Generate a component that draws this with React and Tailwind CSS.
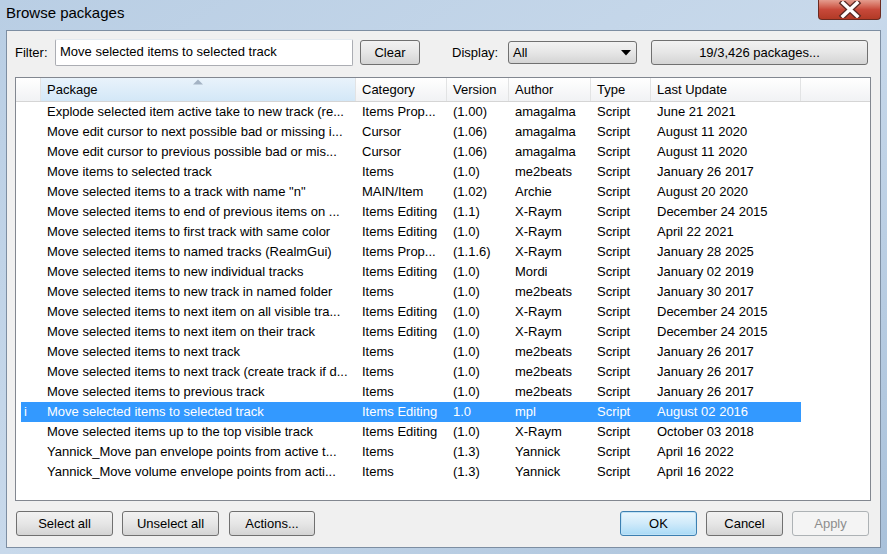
import React from 'react';

const rows = [
  ['', 'Explode selected item active take to new track (re...', 'Items Prop...', '(1.00)', 'amagalma', 'Script', 'June 21 2021'],
  ['', 'Move edit cursor to next possible bad or missing i...', 'Cursor', '(1.06)', 'amagalma', 'Script', 'August 11 2020'],
  ['', 'Move edit cursor to previous possible bad or mis...', 'Cursor', '(1.06)', 'amagalma', 'Script', 'August 11 2020'],
  ['', 'Move items to selected track', 'Items', '(1.0)', 'me2beats', 'Script', 'January 26 2017'],
  ['', 'Move selected items to a track with name "n"', 'MAIN/Item', '(1.02)', 'Archie', 'Script', 'August 20 2020'],
  ['', 'Move selected items to end of previous items on ...', 'Items Editing', '(1.1)', 'X-Raym', 'Script', 'December 24 2015'],
  ['', 'Move selected items to first track with same color', 'Items Editing', '(1.0)', 'X-Raym', 'Script', 'April 22 2021'],
  ['', 'Move selected items to named tracks (RealmGui)', 'Items Prop...', '(1.1.6)', 'X-Raym', 'Script', 'January 28 2025'],
  ['', 'Move selected items to new individual tracks', 'Items Editing', '(1.0)', 'Mordi', 'Script', 'January 02 2019'],
  ['', 'Move selected items to new track in named folder', 'Items', '(1.0)', 'me2beats', 'Script', 'January 30 2017'],
  ['', 'Move selected items to next item on all visible tra...', 'Items Editing', '(1.0)', 'X-Raym', 'Script', 'December 24 2015'],
  ['', 'Move selected items to next item on their track', 'Items Editing', '(1.0)', 'X-Raym', 'Script', 'December 24 2015'],
  ['', 'Move selected items to next track', 'Items', '(1.0)', 'me2beats', 'Script', 'January 26 2017'],
  ['', 'Move selected items to next track (create track if d...', 'Items', '(1.0)', 'me2beats', 'Script', 'January 26 2017'],
  ['', 'Move selected items to previous track', 'Items', '(1.0)', 'me2beats', 'Script', 'January 26 2017'],
  ['i', 'Move selected items to selected track', 'Items Editing', '1.0', 'mpl', 'Script', 'August 02 2016'],
  ['', 'Move selected items up to the top visible track', 'Items Editing', '(1.0)', 'X-Raym', 'Script', 'October 03 2018'],
  ['', 'Yannick_Move pan envelope points from active t...', 'Items', '(1.3)', 'Yannick', 'Script', 'April 16 2022'],
  ['', 'Yannick_Move volume envelope points from acti...', 'Items', '(1.3)', 'Yannick', 'Script', 'April 16 2022'],
];

const SELECTED = 15;

const btn =
  'h-[25px] rounded-[3px] border border-[#707070] bg-gradient-to-b from-[#f2f2f2] via-[#e6e6e6] to-[#d4d4d4] text-[13px] text-black flex items-center justify-center';

const Header = ({ label, active, arrow }) => (
  <div
    className={
      'relative h-full flex items-center pl-[6px] border-r border-[#e2e3e4] ' +
      (active ? 'bg-gradient-to-b from-[#e9f3fb] to-[#d3e7f7]' : '')
    }
  >
    {arrow && (
      <svg className="absolute left-[152px] top-[1px]" width="10" height="6" viewBox="0 0 10 6">
        <path d="M0 5.5 L5 0.5 L10 5.5 Z" fill="#a4b3c4" />
      </svg>
    )}
    {label}
  </div>
);

export default function App() {
  return (
    <div
      className="w-[887px] h-[554px] flex flex-col bg-gradient-to-br from-[#b9cee4] via-[#c8d9eb] to-[#a9c1da] overflow-hidden"
      style={{ fontFamily: '"Liberation Sans", Arial, sans-serif' }}
    >
      {/* Title bar */}
      <div className="h-[30px] flex justify-between items-start shrink-0">
        <div className="pl-[6px] pt-[2px] text-[15px] text-black">Browse packages</div>
        <div className="mr-[6px] w-[63px] h-[20px] rounded-b-[4px] border border-t-0 border-[#6b2a20] bg-gradient-to-b from-[#e49c8e] via-[#c8493a] to-[#b23a26] flex items-center justify-center">
          <svg width="24" height="17" viewBox="0 0 24 17">
            <path d="M5 2 L19 15 M19 2 L5 15" stroke="#5a2a25" strokeWidth="6" strokeLinecap="square" />
            <path d="M5 2 L19 15 M19 2 L5 15" stroke="#ffffff" strokeWidth="3.5" strokeLinecap="square" />
          </svg>
        </div>
      </div>

      {/* Client area */}
      <div className="mx-[6px] mb-[6px] flex-1 border border-[#7d8ea2] bg-[#f0f0f0] flex flex-col pl-[8px] pr-[10px] pt-[8px] text-[13px] text-black">
        {/* Filter row */}
        <div className="flex items-center h-[27px]">
          <span className="w-[40px]">Filter:</span>
          <div className="w-[298px] h-[27px] border border-[#abadb3] border-t-[#e3e9ef] bg-white flex items-center pl-[4px] pb-[2px] rounded-[2px]">
            Move selected items to selected track
          </div>
          <div className={btn + ' ml-[7px] w-[60px]'}>Clear</div>
          <span className="ml-[32px] w-[56px]">Display:</span>
          <div className="w-[129px] h-[23px] rounded-[3px] border border-[#707070] bg-gradient-to-b from-[#f2f2f2] via-[#e6e6e6] to-[#d4d4d4] flex items-center justify-between pl-[4px] pr-[5px]">
            <span>All</span>
            <svg width="10" height="6" viewBox="0 0 10 6">
              <path d="M0 0 H10 L5 5.5 Z" fill="#000" />
            </svg>
          </div>
          <div className={btn + ' ml-[14px] w-[217px]'}>19/3,426 packages...</div>
        </div>

        {/* List */}
        <div className="mt-[11px] w-[856px] h-[424px] border border-[#828790] bg-white overflow-hidden">
          <div className="h-[24px] grid grid-cols-[25px_315px_91px_62px_82px_60px_150px_1fr] border-b border-[#d5d5d5] bg-gradient-to-b from-[#ffffff] to-[#f1f2f4]">
            <Header label="" />
            <Header label="Package" active arrow />
            <Header label="Category" />
            <Header label="Version" />
            <Header label="Author" />
            <Header label="Type" />
            <Header label="Last Update" />
            <div className="h-full" />
          </div>
          {rows.map((r, i) => (
            <div key={i} className="h-[20px] pl-[5px] flex">
              <div
                className={
                  'grid grid-cols-[20px_315px_91px_62px_82px_60px_150px] items-center ' +
                  (i === SELECTED ? 'bg-[#3399ff] text-white' : '')
                }
              >
                {r.map((c, j) => (
                  <div
                    key={j}
                    className={'whitespace-nowrap overflow-hidden ' + (j === 0 ? 'pl-[3px]' : 'pl-[6px]')}
                  >
                    {c}
                  </div>
                ))}
              </div>
            </div>
          ))}
        </div>

        {/* Bottom buttons */}
        <div className="mt-[10px] flex items-center pl-[1px] pr-[1px]">
          <div className={btn + ' w-[97px]'}>Select all</div>
          <div className={btn + ' ml-[9px] w-[97px]'}>Unselect all</div>
          <div className={btn + ' ml-[10px] w-[86px]'}>Actions...</div>
          <div className="flex-1" />
          <div className="h-[25px] w-[77px] rounded-[3px] border border-[#3c7fb1] bg-gradient-to-b from-[#eaf6fd] via-[#cfeafa] to-[#a9daf6] flex items-center justify-center shadow-[inset_0_0_0_1px_#bfe2f6]">
            OK
          </div>
          <div className={btn + ' ml-[9px] w-[77px]'}>Cancel</div>
          <div className="ml-[9px] h-[25px] w-[77px] rounded-[3px] border border-[#adb2b5] bg-[#f4f4f4] text-[#8d8d8d] flex items-center justify-center">
            Apply
          </div>
        </div>
      </div>
    </div>
  );
}
